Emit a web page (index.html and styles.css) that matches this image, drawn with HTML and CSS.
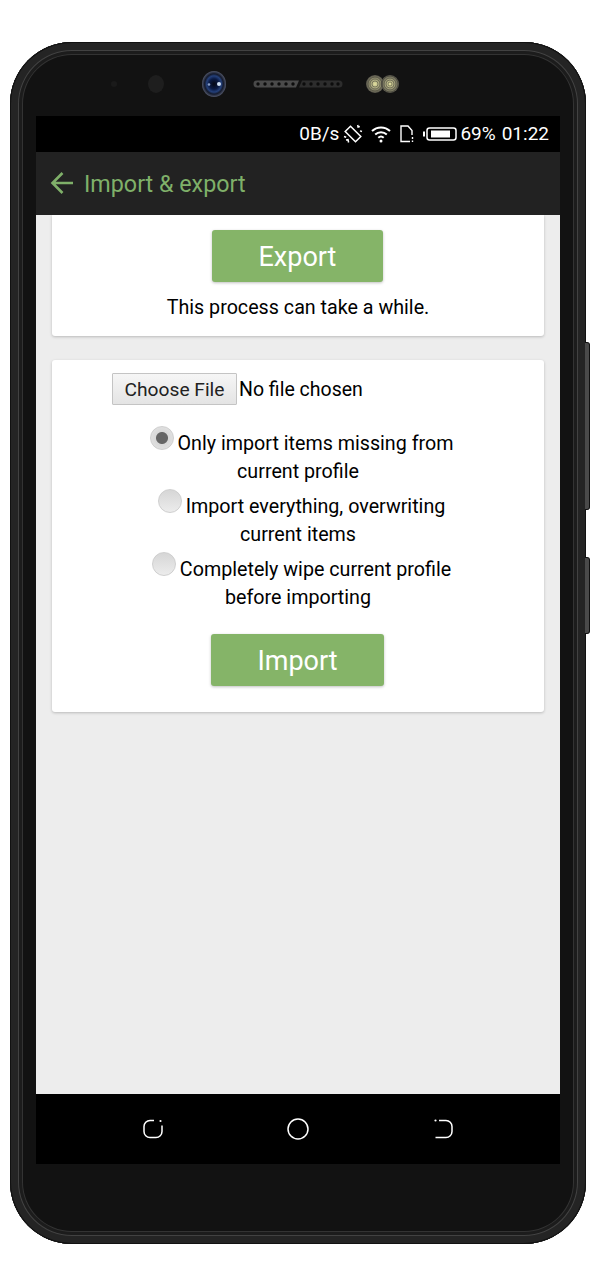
FILE: index.html
```html
<!DOCTYPE html>
<html lang="en">
<head>
<meta charset="utf-8">
<title>Import &amp; export</title>
<link rel="stylesheet" href="styles.css">
</head>
<body>
<div class="phone">
  <span class="side-key key-power"></span>
  <span class="side-key key-volume"></span>
  <div class="sensors">
    <span class="dim-dot"></span>
    <span class="dim-lens"></span>
    <svg class="camera" width="24" height="26" viewBox="0 0 24 26">
      <defs>
        <radialGradient id="lens" cx="50%" cy="50%" r="50%">
          <stop offset="0" stop-color="#050814"/>
          <stop offset=".4" stop-color="#0a1a44"/>
          <stop offset=".62" stop-color="#24407a"/>
          <stop offset=".78" stop-color="#141a2c"/>
          <stop offset="1" stop-color="#50566a"/>
        </radialGradient>
      </defs>
      <ellipse cx="12" cy="13" rx="12" ry="13" fill="url(#lens)"/>
      <circle cx="17" cy="13" r="2" fill="#cfe0f5"/>
      <circle cx="7" cy="13.500" r="1.300" fill="#8aa0c8"/>
    </svg>
    <svg class="speaker" width="92" height="10" viewBox="0 0 92 10">
      <path d="M5 1.500H47L44 8.500H5a3.500 3.500 0 0 1 0-7Z" fill="#4a4a4a"/>
      <path d="M50 1.500H87a3.500 3.500 0 0 1 0 7H47Z" fill="#2d2d2d"/>
      <g fill="#0c0c0c"><circle cx="6" cy="5" r="1.700"/><circle cx="13" cy="5" r="1.700"/><circle cx="20" cy="5" r="1.700"/><circle cx="27" cy="5" r="1.700"/><circle cx="34" cy="5" r="1.700"/><circle cx="41" cy="5" r="1.700"/><circle cx="52" cy="5" r="1.700"/><circle cx="59" cy="5" r="1.700"/><circle cx="66" cy="5" r="1.700"/><circle cx="73" cy="5" r="1.700"/><circle cx="80" cy="5" r="1.700"/><circle cx="86" cy="5" r="1.700"/></g>
    </svg>
    <svg class="flash" width="34" height="18" viewBox="0 0 34 18">
      <defs>
        <radialGradient id="glow" cx="50%" cy="50%" r="50%">
          <stop offset="0" stop-color="#e4e2a0"/>
          <stop offset=".5" stop-color="#a5a27c"/>
          <stop offset="1" stop-color="#56544a"/>
        </radialGradient>
      </defs>
      <circle cx="9" cy="9" r="9" fill="url(#glow)"/>
      <circle cx="24" cy="9" r="9" fill="url(#glow)"/>
      <g fill="none" stroke="#3a3a32" stroke-width=".5"><circle cx="9" cy="9" r="3"/><circle cx="9" cy="9" r="5"/><circle cx="9" cy="9" r="7"/><circle cx="24" cy="9" r="2"/><circle cx="24" cy="9" r="4"/><circle cx="24" cy="9" r="6"/><circle cx="24" cy="9" r="8"/></g>
    </svg>
  </div>
  <div class="screen">
    <div class="statusbar">
      <span>0B/s</span>
      <svg class="st-rotate" width="20" height="20" viewBox="0 0 20 20" fill="none" stroke="#fff" stroke-width="1.500"><path d="M7.500 2.200 17.800 12.500 12.500 17.800 2.200 7.500Z"/><path d="M1 12.500l2.200.7M3 16l2-.3.6 2.800M16.800 2.600l-1.700.4-.4-2M19 7.500l-2-.6"/></svg>
      <svg class="st-wifi" width="20" height="18" viewBox="0 0 20 18" fill="none" stroke="#fff" stroke-width="2"><path d="M1 6a13 13 0 0 1 18 0M4.200 9.500a8.500 8.500 0 0 1 11.600 0M7.300 12.800a4 4 0 0 1 5.400 0"/><circle cx="10" cy="16" r="1.500" fill="#fff" stroke="none"/></svg>
      <svg class="st-sim" width="14" height="18" viewBox="0 0 14 18" fill="none" stroke="#fff" stroke-width="1.400"><path d="M10 16.500H1V1H8L12 5.500V10"/><path d="M12.500 12v2M12.500 15.500v1.500"/></svg>
      <svg class="st-battery" width="34" height="14" viewBox="0 0 34 14"><rect x="0" y="4.500" width="2" height="5" fill="#fff"/><rect x="4" y="1" width="29" height="12" rx="2.500" fill="none" stroke="#fff" stroke-width="1.500"/><rect x="8" y="3.500" width="19" height="7" fill="#fff"/></svg>
      <span>69%</span>
      <span class="st-time">01:22</span>
    </div>
    <header class="appbar">
      <svg class="back" width="24" height="24" viewBox="0 0 24 24" fill="none" stroke="#7fb069" stroke-width="2.600"><path d="M23 12H2.500M12.500 2 2.500 12l10 10"/></svg>
      <h1 class="title">Import &amp; export</h1>
    </header>
    <main class="content">
      <section class="card card-export">
        <button class="action action-export" type="button">Export</button>
        <p class="note">This process can take a while.</p>
      </section>
      <section class="card card-import">
        <div class="file-row">
          <button class="file-button" type="button">Choose File</button>
          <span class="file-name">No file chosen</span>
        </div>
        <div class="options">
          <label class="option"><input type="radio" name="mode" checked>Only import items missing from current profile</label>
          <label class="option"><input type="radio" name="mode">Import everything, overwriting current items</label>
          <label class="option"><input type="radio" name="mode">Completely wipe current profile before importing</label>
        </div>
        <button class="action action-import" type="button">Import</button>
      </section>
    </main>
    <nav class="navbar">
      <svg width="22" height="20" viewBox="0 0 22 20" fill="none" stroke="#fff" stroke-width="1.500"><path d="M12 1.500H8A6 6 0 0 0 2 7.500V12.500A6 6 0 0 0 8 18.500H14A6 6 0 0 0 20 12.500V6.500"/><circle cx="18.500" cy="2" r="1.100" fill="#fff" stroke="none"/></svg>
      <svg width="22" height="22" viewBox="0 0 22 22" fill="none" stroke="#fff" stroke-width="1.500"><circle cx="11" cy="11" r="10"/></svg>
      <svg class="nav-recent" width="20" height="20" viewBox="0 0 20 20" fill="none" stroke="#fff" stroke-width="1.500"><path d="M5 1.500H12A6 6 0 0 1 18 7.500V12.500A6 6 0 0 1 12 18.500H1.500"/><circle cx="1.500" cy="1.500" r="1.100" fill="#fff" stroke="none"/></svg>
    </nav>
  </div>
</div>
</body>
</html>
```
FILE: styles.css
```css
* { box-sizing: border-box; }
html, body { margin: 0; background: #fff; }
body { width: 596px; height: 1280px; overflow: hidden; font-family: Roboto, "Liberation Sans", sans-serif; }

.phone {
  position: relative;
  width: 576px;
  height: 1202px;
  margin: 42px 10px 0;
  padding: 0 26px;
  border-radius: 62px;
  background: #121212;
  box-shadow:
    inset 0 0 0 1px #111,
    inset 0 0 0 8px #242424,
    inset 0 0 0 9px #424242,
    inset 0 0 0 12px #1c1c1c,
    inset 0 0 0 13px #333;
}

.side-key {
  position: absolute;
  right: -4px;
  width: 5px;
  background: #4a4a4a;
  border: 1px solid #111;
  border-left: 0;
  border-radius: 0 3px 3px 0;
}
.key-power { top: 300px; height: 168px; }
.key-volume { top: 515px; height: 77px; }

.sensors {
  position: relative;
  height: 74px;
  display: flex;
  align-items: center;
  padding: 9px 0 0 75px;
}
.dim-dot { width: 6px; height: 6px; border-radius: 50%; background: #1a1a1a; margin-right: 31px; }
.dim-lens { width: 16px; height: 18px; border-radius: 50%; background: #1e1e1e; margin-right: 38px; }
.camera { display: block; margin-right: 26px; }
.speaker { margin-right: 22px; }
.flash { display: block; }

.screen { position: relative; height: 1048px; display: flex; flex-direction: column; background: #ededed; }

.statusbar {
  height: 36px;
  background: #000;
  color: #fff;
  display: flex;
  align-items: center;
  justify-content: flex-end;
  padding-right: 11px;
  font-size: 19px;
  line-height: 36px;
}
.statusbar svg { flex: none; }
.st-rotate { margin-left: 4px; }
.st-wifi { margin-left: 8px; }
.st-sim { margin-left: 9px; }
.st-battery { margin: 0 3px 0 9px; }
.st-time { margin-left: 6px; }

.appbar {
  height: 63px;
  background: #222;
  display: flex;
  align-items: center;
  padding: 0 0 0 14px;
}
.back { margin: 0 10px 2px 0; }
.title { margin: 0; color: #7fb069; font-size: 23.300px; font-weight: 400; }

.content { flex: 1; padding: 0 16px; overflow: hidden; }

.card {
  background: #fff;
  border-radius: 3px;
  box-shadow: 0 1px 3px rgba(0, 0, 0, .22);
  display: flex;
  flex-direction: column;
  align-items: center;
}
.card-export { height: 121px; padding-top: 15px; border-radius: 0 0 3px 3px; }
.card-import { height: 352px; margin-top: 24px; padding-top: 13px; }

.action {
  border: 0;
  border-radius: 3px;
  background: #85b468;
  color: #fff;
  font: 400 27px/49px Roboto, sans-serif;
  height: 52px;
  padding: 3px 0 0;
  margin-right: 1px;
  box-shadow: 0 1px 3px rgba(0, 0, 0, .25);
}
.action-export { width: 171px; }
.action-import { width: 173px; margin-top: 19px; }

.note { margin: 13px 0 0; font-size: 19.700px; line-height: 26px; color: #000; }

.file-row { align-self: flex-start; margin-left: 60px; display: flex; align-items: center; height: 32px; font-size: 19.500px; color: #000; }
.file-button {
  width: 125px; height: 32px; padding: 0;
  border: 1px solid #c4c4c4;
  border-radius: 1px;
  background: linear-gradient(#f6f6f6, #e4e4e4);
  color: #222;
  font: 400 19.200px Roboto, sans-serif;
}
.file-name { margin-left: 2px; }

.options { width: 320px; margin-top: 21px; text-align: center; font-size: 19.700px; line-height: 28px; color: #000; }
.option { display: block; margin-bottom: 3px; }
.option input {
  appearance: none;
  width: 24px; height: 24px;
  margin: 0 4px 0 7px;
  border: 1px solid #cfcfcf;
  border-radius: 50%;
  background: linear-gradient(#d6d6d6, #ececec);
  vertical-align: 0;
}
.option input:checked { background: radial-gradient(circle, #666 0 5.500px, #d9d9d9 6.500px, #e6e6e6); }

.navbar {
  height: 70px;
  flex: none;
  background: #000;
  display: flex;
  align-items: center;
  justify-content: center;
  gap: 123px;
}
.nav-recent { margin-left: 2px; }
```
